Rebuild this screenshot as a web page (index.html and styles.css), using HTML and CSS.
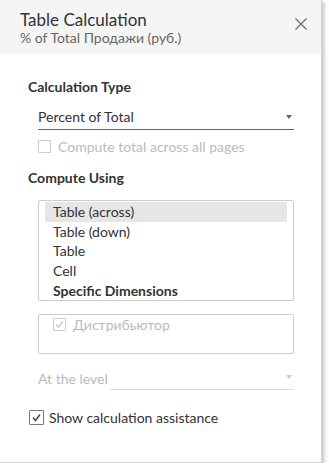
FILE: index.html
```html
<!DOCTYPE html>
<html lang="ru">
<head>
    <meta charset="UTF-8">
    <title>Table Calculation</title>
    <link rel="stylesheet" href="styles.css">
</head>
<body>
    <div class="dialog">
        <header class="dialog-header">
            <div class="titles">
                <h1>Table Calculation</h1>
                <p class="subtitle">% of Total Продажи (руб.)</p>
            </div>
            <span class="close">
                <svg width="12" height="12" viewBox="0 0 12 12"><path d="M0.5 0.5L11.5 11.5M11.5 0.5L0.5 11.5" stroke="#6a6a6a" stroke-width="1.2" fill="none"/></svg>
            </span>
        </header>
        <main class="dialog-body">
            <h2>Calculation Type</h2>
            <div class="select">
                <span>Percent of Total</span>
                <span class="arrow"></span>
            </div>
            <label class="check disabled">
                <span class="box"></span>
                <span>Compute total across all pages</span>
            </label>

            <h2 class="second">Compute Using</h2>
            <div class="listbox">
                <div class="item selected">Table (across)</div>
                <div class="item">Table (down)</div>
                <div class="item">Table</div>
                <div class="item">Cell</div>
                <div class="item bold">Specific Dimensions</div>
            </div>
            <div class="dims">
                <label class="check disabled">
                    <span class="box checked">
                        <svg width="11" height="11" viewBox="0 0 11 11"><path d="M2 5.5L4.5 8L9 2.5" stroke="#c8c8c8" stroke-width="1.3" fill="none"/></svg>
                    </span>
                    <span>Дистрибьютор</span>
                </label>
            </div>
            <div class="level">
                <span class="level-label">At the level</span>
                <div class="select empty">
                    <span></span>
                    <span class="arrow"></span>
                </div>
            </div>
            <label class="check assist">
                <span class="box checked">
                    <svg width="11" height="11" viewBox="0 0 11 11"><path d="M2 5.5L4.5 8.5L9 2.5" stroke="#444" stroke-width="1.4" fill="none"/></svg>
                </span>
                <span>Show calculation assistance</span>
            </label>
        </main>
    </div>
</body>
</html>
```

FILE: styles.css
```css
body, html {
    margin: 0;
    padding: 0;
    background: #fff;
    font-family: Lato, "Liberation Sans", sans-serif;
    color: #333;
}

.dialog {
    width: 321px;
    height: 462px;
    background: #fff;
    border-right: 1px solid #d4d4d4;
    border-bottom: 1px solid #d4d4d4;
    box-shadow: 2px 2px 4px rgba(0, 0, 0, 0.25);
    display: flex;
    flex-direction: column;
}

.dialog-header {
    background: #f5f5f5;
    height: 54px;
    display: flex;
    justify-content: space-between;
    padding: 0 14px 0 20px;
}

.dialog-header h1 {
    margin: 10px 0 0;
    font-size: 17px;
    font-weight: normal;
    color: #333;
    line-height: 20px;
}

.subtitle {
    margin: 0;
    font-size: 14px;
    color: #666;
    line-height: 16px;
}

.close {
    margin-top: 14px;
}

.dialog-body {
    padding: 24px 28px 0 28px;
}

h2 {
    margin: 0;
    font-size: 14px;
    font-weight: bold;
    color: #333;
    line-height: 17px;
}

h2.second {
    margin-top: 14px;
}

.select {
    margin: 9px 0 0 10px;
    width: 256px;
    height: 26px;
    border-bottom: 1px solid #666;
    display: flex;
    justify-content: space-between;
    align-items: center;
    font-size: 14px;
    color: #333;
    box-sizing: border-box;
}

.arrow {
    width: 0;
    height: 0;
    border-left: 3px solid transparent;
    border-right: 3px solid transparent;
    border-top: 4px solid #666;
    margin-right: 2px;
}

.check {
    display: flex;
    align-items: center;
    gap: 7px;
    font-size: 14px;
    line-height: 17px;
    color: #333;
}

.check.disabled {
    color: #bbb;
    margin: 8px 0 0 10px;
}

.box {
    width: 13px;
    height: 13px;
    border: 1px solid #ccc;
    border-radius: 1px;
    display: flex;
    align-items: center;
    justify-content: center;
    box-sizing: border-box;
}

.listbox {
    margin: 14px 0 0 10px;
    width: 256px;
    height: 101px;
    border: 1px solid #ccc;
    border-radius: 2px;
    box-sizing: border-box;
    padding: 1px 6px;
}

.item {
    height: 19.7px;
    line-height: 20px;
    font-size: 14px;
    color: #333;
    padding-left: 8px;
}

.item.selected {
    background: #e6e6e6;
}

.item.bold {
    font-weight: bold;
}

.dims {
    margin: 13px 0 0 10px;
    width: 256px;
    height: 40px;
    border: 1px solid #ccc;
    border-radius: 2px;
    box-sizing: border-box;
    padding-top: 1px;
}

.dims .check.disabled {
    margin: 0 0 0 14px;
}

.level {
    display: flex;
    align-items: flex-end;
    margin: 10px 0 0 10px;
    width: 256px;
}

.level-label {
    font-size: 14px;
    line-height: 17px;
    color: #bbb;
    padding-bottom: 3px;
    width: 72px;
}

.select.empty {
    margin: 0;
    flex: 1;
    border-bottom-color: #ddd;
}

.select.empty .arrow {
    border-top-color: #ccc;
}

.check.assist {
    margin: 19px 0 0 1px;
    gap: 5px;
}

.check.assist .box {
    width: 15px;
    height: 15px;
    border-color: #777;
}
```
